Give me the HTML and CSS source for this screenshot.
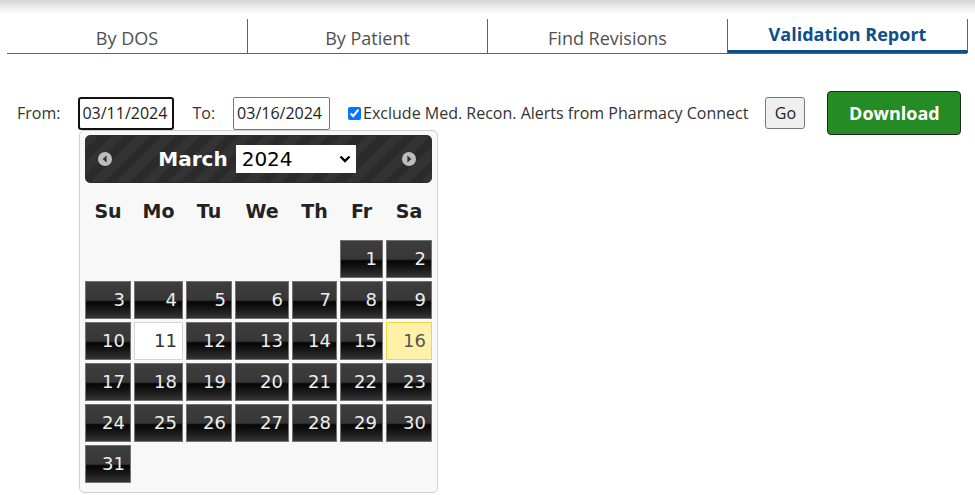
FILE: index.html
```html
<!DOCTYPE html>
<html lang="en">
<head>
<meta charset="utf-8">
<title>Validation Report</title>
<link rel="stylesheet" href="styles.css">
</head>
<body>
<header class="top">
  <nav class="tabs">
    <div class="tab first">By DOS</div>
    <div class="tab">By Patient</div>
    <div class="tab">Find Revisions</div>
    <div class="tab active">Validation Report</div>
  </nav>
</header>

<div class="filters">
  <label class="lbl from">From:</label>
  <input class="date focused" type="text" value="03/11/2024">
  <label class="lbl to">To:</label>
  <input class="date date2" type="text" value="03/16/2024">
  <label class="chk"><input type="checkbox" checked>Exclude Med. Recon. Alerts from Pharmacy Connect</label>
  <button class="go">Go</button>
  <button class="download">Download</button>
</div>

<div class="datepicker">
  <div class="dp-header">
    <span class="nav-icon">
      <svg width="14" height="14" viewBox="0 0 14 14"><circle cx="7" cy="7" r="7" fill="#bdbdbd"/><polygon points="8.6,3.6 8.6,10.4 4.6,7" fill="#333"/></svg>
    </span>
    <div class="dp-title">
      <span class="month">March</span>
      <div class="year-select"><span>2024</span>
        <svg width="12" height="8" viewBox="0 0 12 8"><polyline points="1.5,1.5 6,6 10.5,1.5" fill="none" stroke="#000" stroke-width="2.4"/></svg>
      </div>
    </div>
    <span class="nav-icon">
      <svg width="14" height="14" viewBox="0 0 14 14"><circle cx="7" cy="7" r="7" fill="#bdbdbd"/><polygon points="5.4,3.6 5.4,10.4 9.4,7" fill="#333"/></svg>
    </span>
  </div>
  <div class="dp-grid">
    <div class="dn">Su</div><div class="dn">Mo</div><div class="dn">Tu</div><div class="dn">We</div><div class="dn">Th</div><div class="dn">Fr</div><div class="dn">Sa</div>
    <div></div><div></div><div></div><div></div><div></div><div class="d">1</div><div class="d">2</div>
    <div class="d">3</div><div class="d">4</div><div class="d">5</div><div class="d">6</div><div class="d">7</div><div class="d">8</div><div class="d">9</div>
    <div class="d">10</div><div class="d sel">11</div><div class="d">12</div><div class="d">13</div><div class="d">14</div><div class="d">15</div><div class="d today">16</div>
    <div class="d">17</div><div class="d">18</div><div class="d">19</div><div class="d">20</div><div class="d">21</div><div class="d">22</div><div class="d">23</div>
    <div class="d">24</div><div class="d">25</div><div class="d">26</div><div class="d">27</div><div class="d">28</div><div class="d">29</div><div class="d">30</div>
    <div class="d">31</div>
  </div>
</div>
</body>
</html>
```

FILE: styles.css
```css
html, body {
  margin: 0;
  padding: 0;
  background: #fff;
}
body {
  font-family: "Open Sans", "Noto Sans", sans-serif;
  color: #333;
  width: 975px;
  height: 495px;
  overflow: hidden;
  position: relative;
}

.top {
  background: linear-gradient(to bottom, #d4d4d4 0px, #f2f2f2 9px, #ffffff 15px);
  padding-top: 19px;
}

.tabs {
  display: flex;
  margin-left: 7px;
  width: 960px;
  border-bottom: 1px solid #3d6c9b;
  background: #fff;
}
.tab {
  flex: 0 0 240px;
  height: 34px;
  box-sizing: border-box;
  border-right: 1px solid #3d6c9b;
  text-align: center;
  font-size: 18px;
  line-height: 24px;
  padding-top: 7px;
  color: #505050;
}
.tab.first { flex-basis: 241px; }
.tab.active {
  color: #0d4e8d;
  font-weight: 700;
  padding-top: 3px;
  border-bottom: 3px solid #0d4e8d;
}

.filters {
  display: flex;
  align-items: center;
  height: 44px;
  margin-top: 37px;
  padding-left: 17px;
  font-size: 16px;
  color: #333;
}
.lbl { display: block; }
.lbl.to { margin-left: 18px; }
.date {
  box-sizing: border-box;
  height: 33px;
  width: 96px;
  margin-left: 18px;
  padding: 0 3px;
  font-family: "Open Sans", "Noto Sans", sans-serif;
  font-size: 16px;
  color: #222;
  border: 1px solid #767676;
  border-radius: 2px;
  background: #fff;
  outline: none;
}
.date.focused {
  border: 2px solid #111;
  border-radius: 3px;
  padding: 0 2px;
}
.date.date2 { width: 97px; margin-left: 18px; }

.chk {
  display: flex;
  align-items: center;
  margin-left: 18px;
  color: #333;
}
.chk input {
  width: 13px;
  height: 13px;
  margin: 0 2px 0 0;
  accent-color: #0075ff;
}

.go {
  margin-left: 17px;
  width: 40px;
  height: 32px;
  box-sizing: border-box;
  background: #efefef;
  border: 1px solid #767676;
  border-radius: 3px;
  font-family: "Open Sans", "Noto Sans", sans-serif;
  font-size: 16px;
  color: #222;
  padding: 0;
}
.download {
  margin-left: 22px;
  width: 134px;
  height: 44px;
  box-sizing: border-box;
  background: #258b25;
  border: 1px solid #1e2a1e;
  border-radius: 4px;
  color: #fff;
  font-family: "Open Sans", "Noto Sans", sans-serif;
  font-weight: 700;
  font-size: 18px;
  padding: 0;
}

/* datepicker popup */
.datepicker {
  position: absolute;
  left: 79px;
  top: 130px;
  width: 359px;
  height: 363px;
  box-sizing: border-box;
  border: 1px solid #d0d0d0;
  border-radius: 5px;
  background: #f8f8f8;
  padding: 4px 5px 0 5px;
  font-family: "DejaVu Sans", Verdana, sans-serif;
}
.dp-header {
  height: 48px;
  box-sizing: border-box;
  border: 1px solid #2e2e2e;
  border-radius: 5px;
  background: repeating-linear-gradient(135deg, #333 0px, #333 9px, #2b2b2b 9px, #2b2b2b 18px);
  display: flex;
  align-items: center;
  justify-content: space-between;
  padding: 0 15px 0 12px;
}
.nav-icon { display: flex; }
.dp-title {
  display: flex;
  align-items: center;
  gap: 8px;
}
.month {
  color: #fff;
  font-weight: 700;
  font-size: 20px;
}
.year-select {
  width: 120px;
  height: 28px;
  box-sizing: border-box;
  background: #fff;
  display: flex;
  align-items: center;
  justify-content: space-between;
  padding: 0 5px 0 6px;
  font-size: 20px;
  color: #000;
}

.dp-grid {
  display: grid;
  grid-template-columns: 46px 49px 46px 54px 45px 43px 46px;
  grid-template-rows: 54px repeat(6, 38px);
  column-gap: 3px;
  row-gap: 3px;
}
.dn {
  text-align: center;
  font-weight: 700;
  font-size: 19px;
  line-height: 56px;
  color: #222;
}
.d {
  box-sizing: border-box;
  border: 1px solid #727272;
  background: linear-gradient(to bottom, #3d3d3d 0%, #373737 50%, #060606 55%, #161616 74%, #343434 100%);
  color: #eee;
  font-size: 18px;
  line-height: 36px;
  text-align: right;
  padding-right: 5px;
}
.d.sel {
  background: #fff;
  border-color: #d6d6d6;
  color: #333;
}
.d.today {
  background: #fff2a8;
  border-color: #f5d443;
  color: #555;
}
```
